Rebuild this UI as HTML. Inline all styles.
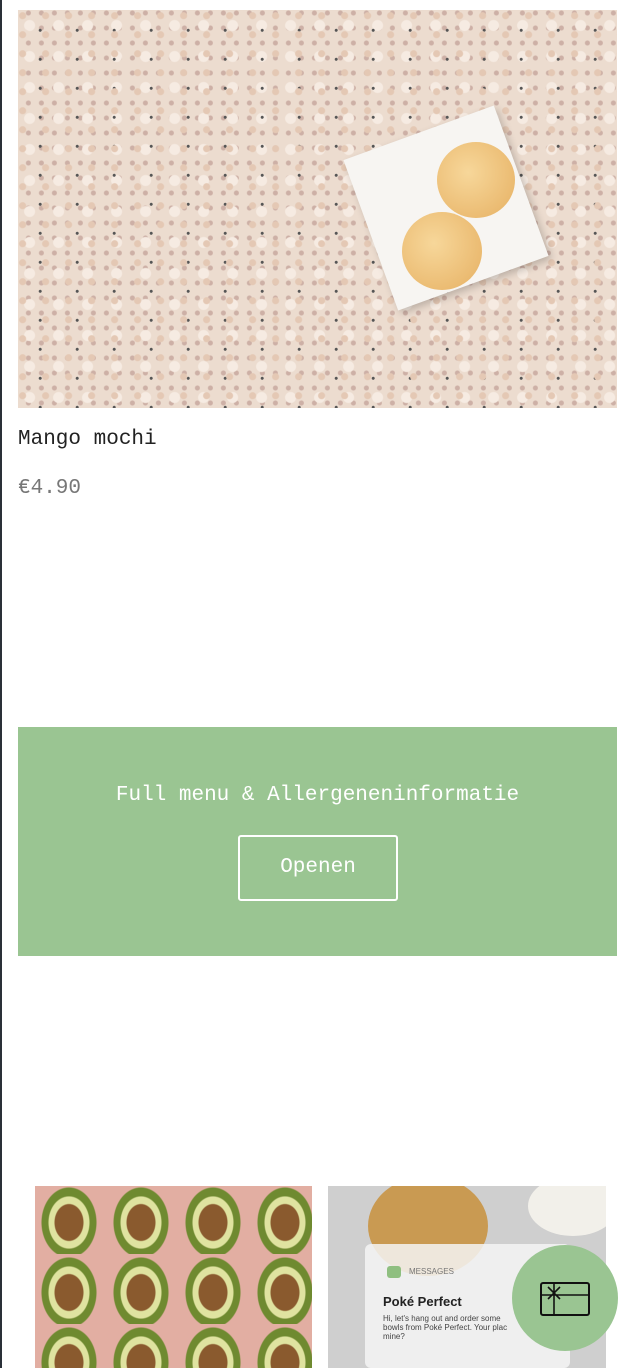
<!DOCTYPE html>
<html><head><meta charset="utf-8"><style>
body{margin:0;width:632px;height:1368px;overflow:hidden;background:#fff;position:relative;font-family:"Liberation Mono",monospace}
.lb{position:absolute;left:0;top:0;width:2px;height:1368px;background:#2a3038}
.img{position:absolute;left:18px;top:10px;width:599px;height:398px;background:#ecdccf;
background-image:radial-gradient(circle at 20% 30%,#e4c8b4 0 3px,transparent 4px),radial-gradient(circle at 60% 70%,#555 0 1.2px,transparent 1.8px),radial-gradient(circle at 40% 50%,#f6ebe2 0 5px,transparent 6px),radial-gradient(circle at 80% 20%,#cdb0a6 0 2px,transparent 3px);
background-size:23px 19px,37px 29px,29px 31px,13px 15px;overflow:hidden}
.plate{position:absolute;width:160px;height:160px;background:#f7f5f2;transform:rotate(-20deg);box-shadow:2px 4px 8px rgba(0,0,0,.2);left:348px;top:118px}
.m{position:absolute;border-radius:50%;background:radial-gradient(circle at 40% 40%,#f7d79a,#e6b062)}
h1{position:absolute;left:18px;top:428px;margin:0;font-size:21px;font-weight:normal;color:#222}
.pr{position:absolute;left:18px;top:477px;font-size:21px;color:#777}
.g{position:absolute;left:18px;top:727px;width:599px;height:229px;background:#9ac592;color:#fff;text-align:center}
.g p{margin:0;position:absolute;top:57px;width:100%;font-size:21px}
.btn{position:absolute;left:220px;top:108px;width:156px;height:62px;border:2px solid #fff;border-radius:3px;line-height:62px;font-size:21px}
.av{position:absolute;left:35px;top:1186px;width:277px;height:182px;background:#e2aea2;
background-image:radial-gradient(ellipse 22px 28px at 50% 55%,#8a5a2e 0 14px,#dfe3a0 15px 20px,#6f8a30 21px 27px,transparent 28px);background-size:72px 70px;background-position:-2px -2px}
.fd{position:absolute;left:328px;top:1186px;width:278px;height:182px;background:#cfcfcf;overflow:hidden}
.card{position:absolute;left:37px;top:58px;width:205px;height:124px;background:rgba(245,245,245,.85);border-radius:6px;font-family:"Liberation Sans",sans-serif}
.fab{position:absolute;left:512px;top:1245px;width:106px;height:106px;border-radius:50%;background:#9ac592}
</style></head><body>
<div class="lb"></div>
<div class="img"><div class="plate"></div>
<div class="m" style="left:419px;top:132px;width:78px;height:76px"></div>
<div class="m" style="left:384px;top:202px;width:80px;height:78px"></div></div>
<h1>Mango mochi</h1>
<div class="pr">€4.90</div>
<div class="g"><p>Full menu &amp; Allergeneninformatie</p><div class="btn">Openen</div></div>
<div class="av"></div>
<div class="fd">
<div style="position:absolute;left:40px;top:-10px;width:120px;height:100px;border-radius:50%;background:#c99a52"></div>
<div style="position:absolute;left:200px;top:-10px;width:90px;height:60px;border-radius:50%;background:#f2f0ea"></div>
<div class="card"><div style="position:absolute;left:22px;top:22px;width:14px;height:12px;background:#8fbf80;border-radius:3px"></div>
<div style="position:absolute;left:44px;top:23px;font-size:8px;color:#777">MESSAGES</div>
<div style="position:absolute;left:18px;top:50px;font-size:13px;font-weight:bold;color:#222">Poké Perfect</div>
<div style="position:absolute;left:18px;top:70px;font-size:8px;color:#444;line-height:9px">Hi, let's hang out and order some<br>bowls from Poké Perfect. Your plac<br>mine?</div></div></div>
<div class="fab"><svg width="106" height="106" viewBox="0 0 106 106"><rect x="29" y="38" width="48" height="32" rx="2" fill="none" stroke="#111" stroke-width="2"/><path d="M29 50H77M42 38V70M36 42l6 6 6-6M36 54l6-6 6 6" fill="none" stroke="#111" stroke-width="1.6"/></svg></div>
</body></html>
